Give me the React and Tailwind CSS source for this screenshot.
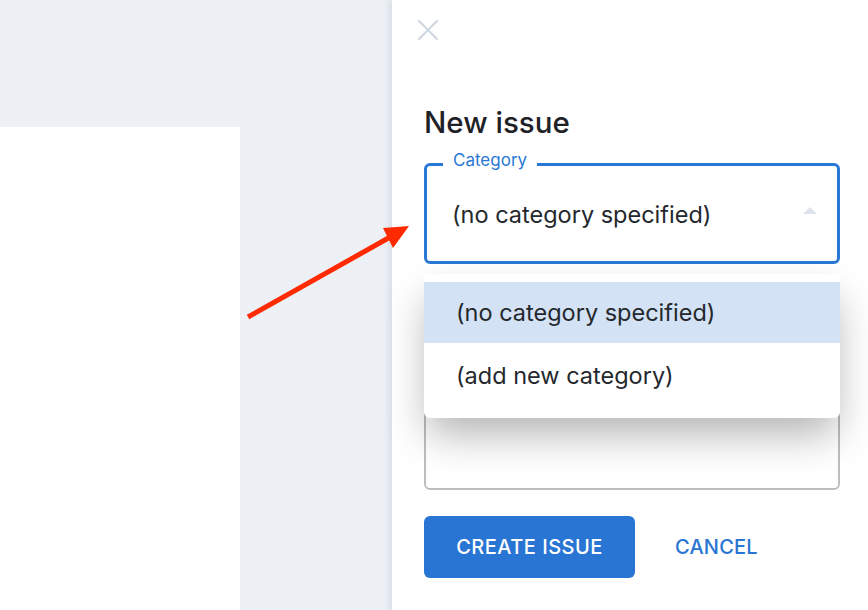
import React from "react";

export default function App() {
  return (
    <div
      className="relative flex w-[868px] h-[610px] overflow-hidden bg-[#edf1f6]"
      style={{ fontFamily: 'Inter, "Noto Sans", sans-serif' }}
    >
      {/* left background with card */}
      <div className="flex-1 pt-[127px]">
        <div className="w-[240px] h-full bg-white" />
      </div>

      {/* side panel */}
      <div className="relative w-[476px] h-full bg-white shadow-[-3px_0_6px_rgba(30,50,80,0.10)] pl-[32px] pr-[28px]">
        <div className="pt-[20px] -ml-[6px]">
          <svg width="20" height="20" viewBox="0 0 20 20" className="block">
            <path d="M1 1 L19 19 M19 1 L1 19" stroke="#cdd6e1" strokeWidth="2" strokeLinecap="round" />
          </svg>
        </div>

        <h1 className="mt-[64px] h-[36px] text-[29.5px] leading-[36px] font-medium text-[#1e2227]">
          New issue
        </h1>

        <div className="relative mt-[23px]">
          {/* select */}
          <div className="relative h-[101px] border-[3px] border-[#2a78d6] rounded-[6px] flex items-center pl-[25px] pr-[20px]">
            <span className="absolute -top-[17px] left-[16px] px-[10px] bg-white text-[17px] leading-[22px] text-[#2a78d6]">
              Category
            </span>
            <span className="flex-1 pt-[3px] text-[23.5px] text-[#24282d]">(no category specified)</span>
            <svg width="14" height="7" viewBox="0 0 14 7" className="block -mt-[6px]">
              <path d="M0 7 L7 0 L14 7 Z" fill="#dde3ea" />
            </svg>
          </div>

          {/* textarea behind */}
          <div className="mt-[26px] h-[200px] border-2 border-[#bdbdbd] rounded-[6px]" />

          {/* dropdown menu */}
          <div className="absolute left-0 right-0 top-[111px] bg-white rounded-b-[6px] pt-[8px] pb-[10px] shadow-[0_20px_40px_-4px_rgba(0,0,0,0.3)]">
            <div className="h-[61px] flex items-center pl-[32px] bg-[#d3e2f4] text-[23.5px] text-[#24282d]">
              (no category specified)
            </div>
            <div className="h-[65px] flex items-center pl-[32px] text-[23.5px] text-[#24282d]">
              (add new category)
            </div>
          </div>
        </div>

        <div className="mt-[26px] flex items-center">
          <button className="w-[211px] h-[62px] rounded-[6px] bg-[#2875d3] text-white text-[20px] font-medium tracking-[0.5px]">
            CREATE ISSUE
          </button>
          <button className="ml-[40px] text-[#2875d3] text-[20px] font-medium tracking-[0.2px]">
            CANCEL
          </button>
        </div>
      </div>

      {/* red annotation arrow */}
      <svg
        className="absolute top-0 left-0 pointer-events-none"
        width="868"
        height="610"
        viewBox="0 0 868 610"
      >
        <line x1="248" y1="317" x2="392" y2="236" stroke="#ff2a00" strokeWidth="5" />
        <path d="M383 228 L409 226 L393 248 Z" fill="#ff2a00" />
      </svg>
    </div>
  );
}
